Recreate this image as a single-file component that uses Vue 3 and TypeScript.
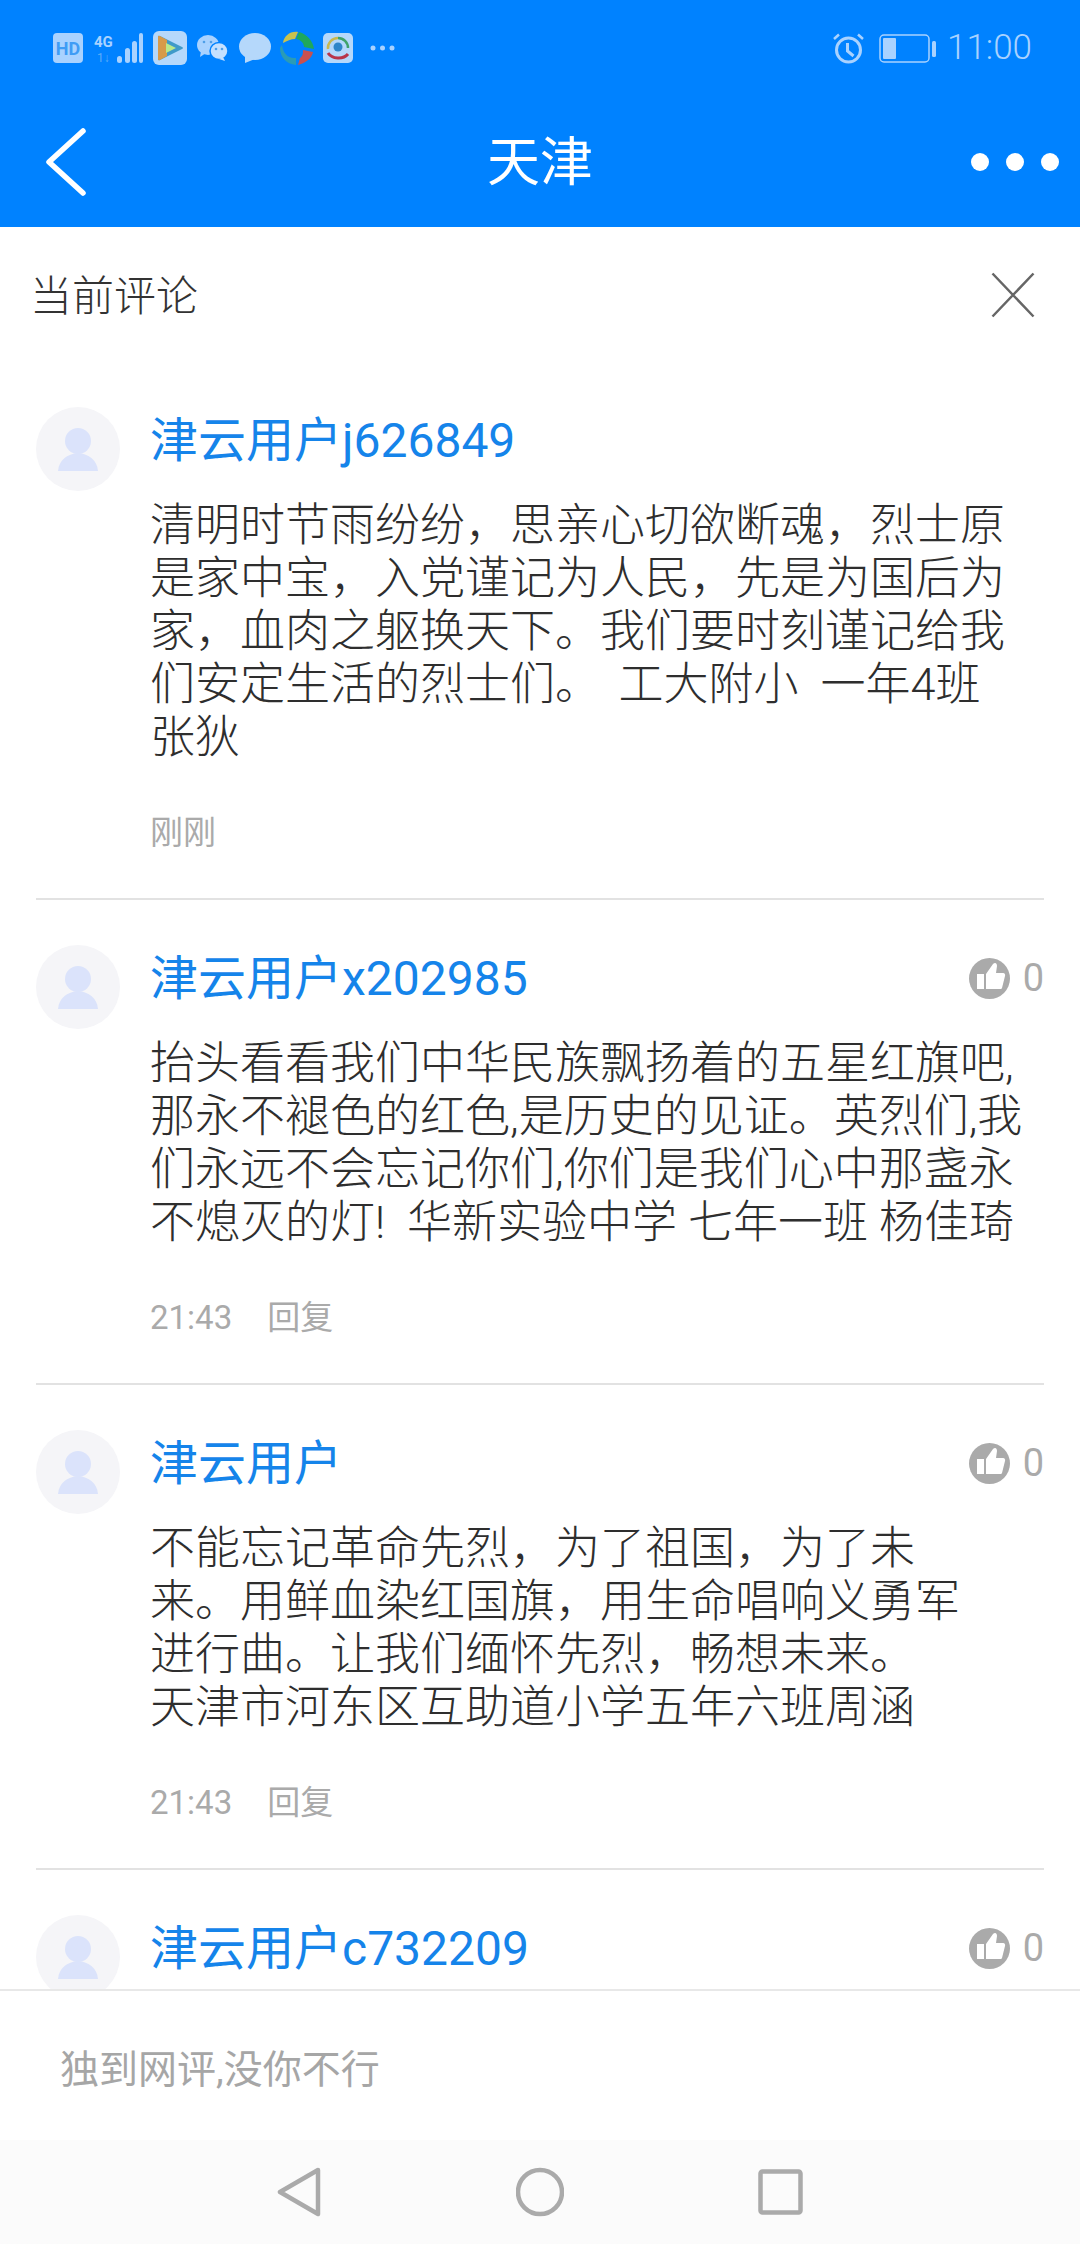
<script setup lang="ts">
interface CommentItem {
  name: string
  lines: string[]
  time: string
  reply: boolean
  like: boolean
}

const comments: CommentItem[] = [
  {
    name: '津云用户j626849',
    lines: [
      '清明时节雨纷纷，思亲心切欲断魂，烈士原',
      '是家中宝，入党谨记为人民，先是为国后为',
      '家，血肉之躯换天下。我们要时刻谨记给我',
      '们安定生活的烈士们。\u2006 工大附小  一年4班',
      '张狄',
    ],
    time: '刚刚',
    reply: false,
    like: false,
  },
  {
    name: '津云用户x202985',
    lines: [
      '抬头看看我们中华民族飘扬着的五星红旗吧,',
      '那永不褪色的红色,是历史的见证。英烈们,我',
      '们永远不会忘记你们,你们是我们心中那盏永',
      '不熄灭的灯!  华新实验中学 七年一班 杨佳琦',
    ],
    time: '21:43',
    reply: true,
    like: true,
  },
  {
    name: '津云用户',
    lines: [
      '不能忘记革命先烈，为了祖国，为了未',
      '来。用鲜血染红国旗，用生命唱响义勇军',
      '进行曲。让我们缅怀先烈，畅想未来。',
      '天津市河东区互助道小学五年六班周涵',
    ],
    time: '21:43',
    reply: true,
    like: true,
  },
  {
    name: '津云用户c732209',
    lines: [],
    time: '',
    reply: false,
    like: true,
  },
]
</script>

<template>
  <div class="screen">
    <header class="top">
      <div class="status">
        <div class="status-left">
          <svg class="ic g11" width="30" height="30" viewBox="0 0 30 30">
            <rect width="30" height="30" rx="4" fill="#a9d2ff" />
            <text x="15" y="22" text-anchor="middle" class="hd">HD</text>
          </svg>
          <svg class="ic g10" width="49" height="31" viewBox="0 0 49 31">
            <text x="0" y="14" class="g4">4G</text>
            <text x="3" y="29" class="g1">1↓</text>
            <rect x="23" y="23" width="5" height="7" rx="2.500" fill="#a9d2ff" />
            <rect x="31" y="15" width="5" height="15" rx="2.500" fill="#a9d2ff" />
            <rect x="38" y="8" width="5" height="22" rx="2.500" fill="#a9d2ff" />
            <rect x="45" y="0" width="4" height="30" rx="2" fill="#a9d2ff" />
          </svg>
          <svg class="ic g10" width="34" height="34" viewBox="0 0 34 34">
            <rect width="34" height="34" rx="6" fill="#b5d8fb" />
            <path d="M5 6 Q5 4 7 5 L29 16 Q31 17 29 18 L7 29 Q5 30 5 28 Z" fill="#3f9ac9" />
            <path d="M5 6 Q5 4 7 5 L14 9 L14 25 L7 29 Q5 30 5 28 Z" fill="#d79a4a" />
            <path d="M13 12 L23 17 L13 22 Z" fill="#b9e88a" />
          </svg>
          <svg class="ic g11" width="31" height="26" viewBox="0 0 31 26">
            <ellipse cx="11" cy="10" rx="11" ry="10" fill="#a9d2ff" />
            <path d="M4 16 L3 22 L9 18 Z" fill="#a9d2ff" />
            <ellipse cx="22" cy="16" rx="9" ry="8.500" fill="#c4e0ff" stroke="#0082ff" stroke-width="1.500" />
            <path d="M26 22 L28 26 L22 24 Z" fill="#c4e0ff" />
            <circle cx="7" cy="7" r="1.300" fill="#4f9fe8" />
            <circle cx="14" cy="7" r="1.300" fill="#4f9fe8" />
            <circle cx="19" cy="14" r="1.300" fill="#4f9fe8" />
            <circle cx="25" cy="14" r="1.300" fill="#4f9fe8" />
          </svg>
          <svg class="ic g9" width="32" height="30" viewBox="0 0 32 30">
            <ellipse cx="16" cy="13.500" rx="16" ry="13.500" fill="#b5d8fb" />
            <path d="M6 21 L6 30 L16 26 Z" fill="#b5d8fb" />
          </svg>
          <svg class="ic g9" width="34" height="34" viewBox="0 0 34 34">
            <path d="M3 12 C4 5 10 0 18 1 L15 8 C11 8 7 10 3 12 Z" fill="#c9c24e" />
            <path d="M19 1 C27 3 33 10 34 18 L24 16 C24 11 19 8 16 8 Z" fill="#1fa85c" />
            <path d="M33 21 C32 27 26 32 18 34 L20 27 C23 25 23 22 23 19 Z" fill="#c9504f" />
            <path d="M16 34 C6 33 0 26 0 17 L2 14 C3 22 8 28 16 27 Z" fill="#2a9bb5" />
          </svg>
          <svg class="ic g17" width="30" height="30" viewBox="0 0 30 30">
            <rect width="30" height="30" rx="5" fill="#b5d8fb" />
            <path d="M5 16 A10 10 0 0 1 15 5" fill="none" stroke="#c9b950" stroke-width="2.500" />
            <path d="M15 5 A10 10 0 0 1 25 15" fill="none" stroke="#3fa36a" stroke-width="2.500" />
            <path d="M5 20 C9 26 20 27 25 21" fill="none" stroke="#b8344a" stroke-width="3" />
            <circle cx="15" cy="14" r="4.500" fill="#2f86c9" />
          </svg>
          <svg width="25" height="6" viewBox="0 0 25 6">
            <circle cx="3" cy="3" r="2.500" fill="#a9d2ff" />
            <circle cx="12.500" cy="3" r="2.500" fill="#a9d2ff" />
            <circle cx="22" cy="3" r="2.500" fill="#a9d2ff" />
          </svg>
        </div>
        <div class="status-right">
          <svg width="31" height="31" viewBox="0 0 31 31">
            <circle cx="15.500" cy="17" r="12" fill="none" stroke="#a9d2ff" stroke-width="3" />
            <path d="M14.500 10 L14.500 18 L20.500 23" fill="none" stroke="#a9d2ff" stroke-width="3" />
            <path d="M1 6 L6 1.500 M25 1.500 L30 6" stroke="#a9d2ff" stroke-width="2.500" />
          </svg>
          <svg class="batt" width="57" height="29" viewBox="0 0 57 29">
            <rect x="1" y="1" width="49" height="27" rx="4" fill="none" stroke="#a9d2ff" stroke-width="1.500" />
            <rect x="4" y="4" width="13" height="21" rx="1" fill="#a9d2ff" />
            <rect x="53" y="7" width="4" height="16" rx="1.500" fill="#a9d2ff" />
          </svg>
          <span class="clock">11:00</span>
        </div>
      </div>
      <nav class="nav">
        <svg class="back" width="46" height="72" viewBox="0 0 46 72">
          <path d="M41 5 L7 36 L41 67" fill="none" stroke="#fff" stroke-width="5.500" stroke-linecap="round" stroke-linejoin="round" />
        </svg>
        <span class="title">天津</span>
        <div class="dots"><i></i><i></i><i></i></div>
      </nav>
    </header>

    <div class="panel-head">
      <span class="panel-title">当前评论</span>
      <svg class="close" width="44" height="46" viewBox="0 0 44 46">
        <path d="M1.500 1.500 L42.500 44.500 M42.500 1.500 L1.500 44.500" stroke="#666" stroke-width="2.500" fill="none" />
      </svg>
    </div>

    <main class="list">
      <article v-for="c in comments" :key="c.name" class="comment">
        <svg class="avatar" width="84" height="84" viewBox="0 0 84 84">
          <circle cx="42" cy="42" r="42" fill="#f5f5f8" />
          <circle cx="42" cy="34" r="13" fill="#dbe3fb" />
          <path d="M22 64 C23 53 31 47 42 46 C53 47 61 53 62 64 Z" fill="#dbe3fb" />
        </svg>
        <div class="body">
          <div class="name-row">
            <span class="name">{{ c.name }}</span>
            <span v-if="c.like" class="like">
              <svg width="41" height="41" viewBox="0 0 41 41">
                <circle cx="20.500" cy="20.500" r="20.500" fill="#aaa" />
                <path d="M8 16 H15 V31 H8 Z M17 16 L24 6 C26 4 28 5 28 8 L27 15 H34 C36 15 36.500 17 36 18 L33 30 C32.500 31 32 31 31 31 H17 Z" fill="#fff" />
              </svg>
              <span class="count">0</span>
            </span>
          </div>
          <div v-if="c.lines.length" class="text">
            <div v-for="(l, i) in c.lines" :key="i" class="line">{{ l }}</div>
          </div>
          <div v-if="c.time" class="meta">
            <span>{{ c.time }}</span>
            <span v-if="c.reply">回复</span>
          </div>
        </div>
      </article>
    </main>

    <div class="input-bar">独到网评,没你不行</div>

    <footer class="sys">
      <svg width="44" height="50" viewBox="0 0 44 50">
        <path d="M41 3 L3 25 L41 47 Z" fill="none" stroke="#aaa" stroke-width="4.500" stroke-linejoin="round" />
      </svg>
      <svg width="48" height="50" viewBox="0 0 48 50">
        <circle cx="24" cy="25" r="22" fill="none" stroke="#aaa" stroke-width="4.500" />
      </svg>
      <svg width="45" height="46" viewBox="0 0 45 46">
        <rect x="2.500" y="2.500" width="40" height="41" rx="2" fill="none" stroke="#aaa" stroke-width="4.500" />
      </svg>
    </footer>
  </div>
</template>

<style>
html, body { margin: 0; padding: 0; background: #fff; }
</style>

<style scoped>
.screen {
  width: 1080px;
  height: 2244px;
  display: flex;
  flex-direction: column;
  overflow: hidden;
  background: #fff;
  font-family: Roboto, "Noto Sans CJK SC", sans-serif;
}
.top { height: 227px; flex: none; background: #0082ff; display: flex; flex-direction: column; }
.status {
  height: 96px;
  display: flex;
  justify-content: space-between;
  align-items: center;
  padding: 0 48px 0 53px;
  box-sizing: border-box;
}
.status-left { display: flex; align-items: center; height: 34px; }
.status-left .ic { flex: none; }
.g9 { margin-right: 9px; }
.g10 { margin-right: 10px; }
.g11 { margin-right: 11px; }
.g17 { margin-right: 17px; }
.hd { font: 700 18px Roboto, sans-serif; fill: #3f9cf5; }
.g4 { font: 700 15px Roboto, sans-serif; fill: #a9d2ff; }
.g1 { font: 400 12px Roboto, sans-serif; fill: #5cacf8; }
.status-right { display: flex; align-items: center; }
.batt { margin-left: 15px; margin-right: 11px; }
.clock { font-size: 35px; font-weight: 300; color: #a9d2ff; line-height: 40px; }
.nav {
  flex: 1;
  position: relative;
  display: flex;
  align-items: center;
  justify-content: space-between;
  padding: 0 21px 0 42px;
}
.title {
  position: absolute;
  left: 0;
  right: 0;
  top: 37px;
  text-align: center;
  font-size: 53px;
  line-height: 60px;
  color: #fff;
}
.dots { display: flex; gap: 17px; }
.dots i { width: 18px; height: 18px; border-radius: 50%; background: #fff; }
.panel-head {
  flex: none;
  height: 140px;
  box-sizing: border-box;
  padding: 0 45px 0 30px;
  display: flex;
  justify-content: space-between;
  align-items: center;
}
.close { margin-bottom: 5px; }
.panel-title { font-size: 42px; line-height: 60px; color: #333; font-weight: 300; }
.list { flex: 1; min-height: 0; overflow: hidden; padding: 0 36px; }
.comment {
  display: flex;
  gap: 30px;
  padding: 40px 0 45px;
  border-bottom: 2px solid #e2e2e2;
}
.comment + .comment { padding-top: 45px; }
.avatar { flex: none; }
.body { flex: 1; min-width: 0; }
.name-row { display: flex; justify-content: space-between; align-items: center; height: 66px; }
.name { font-size: 48px; line-height: 60px; color: #1584ea; padding-top: 2px; }
.like { display: flex; align-items: center; gap: 13px; }
.count { font-size: 38px; color: #aaa; line-height: 40px; }
.text { margin-top: 26px; font-size: 45px; line-height: 53px; color: #2e2e2e; font-weight: 300; }
.line { white-space: pre; }
.meta { display: flex; gap: 35px; margin-top: 49px; font-size: 33px; line-height: 40px; color: #aaa; }
.input-bar {
  flex: none;
  height: 151px;
  box-sizing: border-box;
  padding-left: 60px;
  display: flex;
  align-items: center;
  background: #fff;
  border-top: 2px solid #e8e8e8;
  font-size: 39px;
  color: #a6a6a6;
}
.sys {
  flex: none;
  height: 104px;
  background: #fbfbfb;
  display: flex;
  align-items: center;
  box-sizing: border-box;
  padding: 0 277px;
  justify-content: space-between;
}
</style>
